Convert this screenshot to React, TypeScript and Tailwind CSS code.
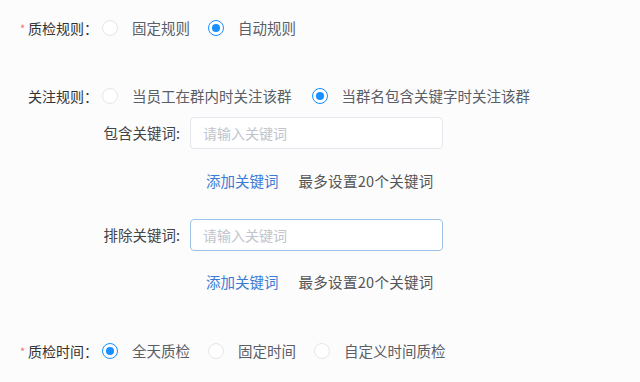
import React from "react"

const font = { fontFamily: '"Noto Sans CJK SC", "Noto Sans", sans-serif' }

function Radio({ checked, label, className = "" }: { checked?: boolean; label: string; className?: string }) {
  return (
    <label className={`flex items-center ${className}`}>
      {checked ? (
        <span className="w-4 h-4 rounded-full border border-[#1890ff] flex items-center justify-center bg-white">
          <span className="w-[8px] h-[8px] rounded-full bg-[#1890ff]" />
        </span>
      ) : (
        <span className="w-4 h-4 rounded-full border border-[#e4e6ea] bg-white" />
      )}
      <span className="ml-[14px] text-[14.5px] text-[#5a5e66]">{label}</span>
    </label>
  )
}

function Label({ text, required }: { text: string; required?: boolean }) {
  return (
    <div className="w-[82px] flex items-center text-[14px] text-[#333]">
      <span className="w-2 text-[#f56c6c] text-[11px] leading-none">{required ? "*" : ""}</span>
      <span>{text}：</span>
    </div>
  )
}

function KeywordBlock({ label, focused }: { label: string; focused?: boolean }) {
  return (
    <>
      <div className="flex items-center">
        <div className="w-[190px] pr-[10px] text-right text-[14.5px] text-[#444]">{label}:</div>
        <input
          placeholder="请输入关键词"
          className={`w-[253px] h-8 rounded border bg-white px-[12px] text-[14px] outline-none placeholder:text-[#c0c4cc] ${
            focused ? "border-[#9cc3e6]" : "border-[#e4e7ed]"
          }`}
          style={font}
        />
      </div>
      <div className="flex items-center h-5 pl-[206px] text-[14.5px]">
        <span className="text-[#3a7bd5]">添加关键词</span>
        <span className="ml-[20px] text-[#555] tracking-[0.3px]">最多设置20个关键词</span>
      </div>
    </>
  )
}

export default function App() {
  return (
    <div className="w-[640px] h-[382px] bg-[#fcfcfd] pl-5 pt-[18px]" style={font}>
      <div className="flex items-center h-5">
        <Label text="质检规则" required />
        <Radio label="固定规则" />
        <Radio label="自动规则" checked className="ml-[18px]" />
      </div>

      <div className="flex items-center h-5 mt-[48px]">
        <Label text="关注规则" />
        <Radio label="当员工在群内时关注该群" />
        <Radio label="当群名包含关键字时关注该群" checked className="ml-[20px]" />
      </div>

      <div className="-ml-5 mt-[11px] flex flex-col gap-[22px]">
        <KeywordBlock label="包含关键词" />
      </div>
      <div className="-ml-5 mt-[28px] flex flex-col gap-[21px]">
        <KeywordBlock label="排除关键词" focused />
      </div>

      <div className="flex items-center h-5 mt-[49px]">
        <Label text="质检时间" required />
        <Radio label="全天质检" checked />
        <Radio label="固定时间" className="ml-[18px]" />
        <Radio label="自定义时间质检" className="ml-[18px]" />
      </div>
    </div>
  )
}
